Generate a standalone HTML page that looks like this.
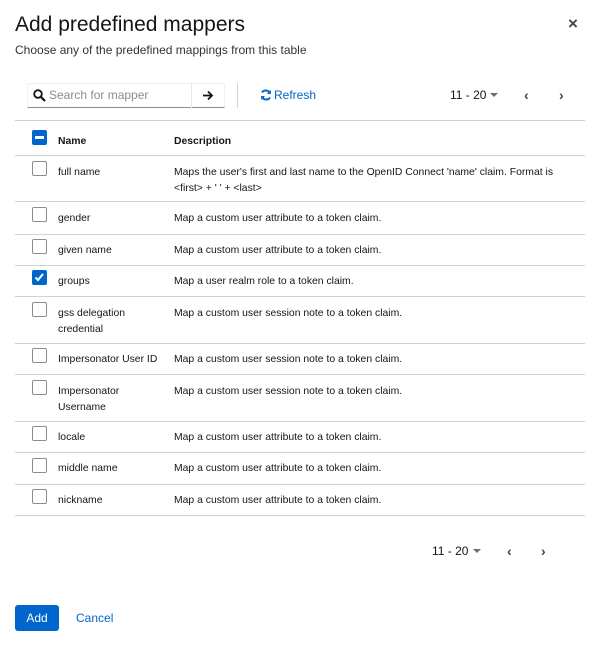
<!DOCTYPE html>
<html><head><style>
*{margin:0;padding:0;box-sizing:border-box}
body{width:600px;height:647px;background:#fff;font-family:"Liberation Sans",sans-serif;color:#151515;position:relative;overflow:hidden}
.a{position:absolute;white-space:nowrap}
.t{font-size:10.4px;line-height:16px}
.hl{position:absolute;left:15px;width:570px;height:1px;background:#d2d2d2}
.cb{position:absolute;left:32px;width:15px;height:15px;border:1px solid #8a8d90;border-radius:2px;background:#fff}
</style></head><body>
<div class="a" style="left:15px;top:11px;font-size:21px;line-height:28px">Add predefined mappers</div>
<div class="a" style="left:568px;top:14px;font-size:17px;font-weight:bold;color:#444">×</div>
<div class="a" style="left:15px;top:42px;font-size:12px;line-height:17px;color:#333">Choose any of the predefined mappings from this table</div>

<div class="a" style="left:27px;top:83px;width:198px;height:25px;border:1px solid #f0f0f0;border-bottom:1px solid #8a8d90"></div>
<div class="a" style="left:191px;top:83px;width:1px;height:25px;background:#e8e8e8"></div>
<svg class="a" style="left:33px;top:89px" width="13" height="13" viewBox="0 0 13 13"><circle cx="5" cy="5" r="3.8" fill="none" stroke="#151515" stroke-width="1.8"/><path d="M8 8l4 4" stroke="#151515" stroke-width="2.2"/></svg>
<div class="a" style="left:49px;top:88px;font-size:12px;color:#8a8d90">Search for mapper</div>
<svg class="a" style="left:202px;top:90px" width="12" height="11" viewBox="0 0 12 11"><path d="M1 5.5h9M6 1.5l4 4-4 4" fill="none" stroke="#151515" stroke-width="1.8"/></svg>
<div class="a" style="left:237px;top:83px;width:1px;height:25px;background:#d2d2d2"></div>
<svg class="a" style="left:260px;top:89px" width="12" height="12" viewBox="0 0 12 12"><path d="M10 4.5A4.5 4.5 0 0 0 2 3.5M2 7.5A4.5 4.5 0 0 0 10 8.5" fill="none" stroke="#0066cc" stroke-width="2"/><path d="M10.8 1v4H7z M1.2 11V7h3.8z" fill="#0066cc"/></svg>
<div class="a" style="left:274px;top:88px;font-size:12px;color:#0066cc">Refresh</div>
<div class="a" style="left:450px;top:88px;font-size:12px">11 - 20</div>
<div class="a" style="left:490px;top:93px;border:4px solid transparent;border-top:4px solid #6a6e73;border-bottom:0"></div>
<div class="a" style="left:524px;top:87px;font-size:14px;color:#444;font-weight:bold">‹</div>
<div class="a" style="left:559px;top:87px;font-size:14px;color:#444;font-weight:bold">›</div>

<div class="hl" style="top:120px"></div>
<div class="a" style="left:32px;top:130px;width:15px;height:15px;background:#0066cc;border-radius:2px"><div style="position:absolute;left:3px;top:6px;width:9px;height:3px;background:#fff"></div></div>
<div class="a t" style="left:58px;top:134px;font-weight:bold">Name</div>
<div class="a t" style="left:174px;top:134px;font-weight:bold">Description</div>
<div class="hl" style="top:155px"></div>

<div class="cb" style="top:161px"></div>
<div class="a t" style="left:58px;top:165px">full name</div>
<div class="a t" style="left:174px;top:165px">Maps the user's first and last name to the OpenID Connect 'name' claim. Format is<br>&lt;first&gt; + ' ' + &lt;last&gt;</div>
<div class="hl" style="top:201px"></div>

<div class="cb" style="top:207px"></div>
<div class="a t" style="left:58px;top:211px">gender</div>
<div class="a t" style="left:174px;top:211px">Map a custom user attribute to a token claim.</div>
<div class="hl" style="top:234px"></div>

<div class="cb" style="top:239px"></div>
<div class="a t" style="left:58px;top:243px">given name</div>
<div class="a t" style="left:174px;top:243px">Map a custom user attribute to a token claim.</div>
<div class="hl" style="top:265px"></div>

<div class="a" style="left:32px;top:270px;width:15px;height:15px;background:#0066cc;border-radius:2px"><svg width="15" height="15" viewBox="0 0 15 15"><path d="M3.5 7.5l2.5 2.5 5-6" fill="none" stroke="#fff" stroke-width="2"/></svg></div>
<div class="a t" style="left:58px;top:274px">groups</div>
<div class="a t" style="left:174px;top:274px">Map a user realm role to a token claim.</div>
<div class="hl" style="top:296px"></div>

<div class="cb" style="top:302px"></div>
<div class="a t" style="left:58px;top:306px">gss delegation<br>credential</div>
<div class="a t" style="left:174px;top:306px">Map a custom user session note to a token claim.</div>
<div class="hl" style="top:343px"></div>

<div class="cb" style="top:348px"></div>
<div class="a t" style="left:58px;top:352px">Impersonator User ID</div>
<div class="a t" style="left:174px;top:352px">Map a custom user session note to a token claim.</div>
<div class="hl" style="top:374px"></div>

<div class="cb" style="top:380px"></div>
<div class="a t" style="left:58px;top:384px">Impersonator<br>Username</div>
<div class="a t" style="left:174px;top:384px">Map a custom user session note to a token claim.</div>
<div class="hl" style="top:421px"></div>

<div class="cb" style="top:426px"></div>
<div class="a t" style="left:58px;top:430px">locale</div>
<div class="a t" style="left:174px;top:430px">Map a custom user attribute to a token claim.</div>
<div class="hl" style="top:452px"></div>

<div class="cb" style="top:458px"></div>
<div class="a t" style="left:58px;top:461px">middle name</div>
<div class="a t" style="left:174px;top:461px">Map a custom user attribute to a token claim.</div>
<div class="hl" style="top:484px"></div>

<div class="cb" style="top:489px"></div>
<div class="a t" style="left:58px;top:493px">nickname</div>
<div class="a t" style="left:174px;top:493px">Map a custom user attribute to a token claim.</div>
<div class="hl" style="top:515px"></div>

<div class="a" style="left:432px;top:544px;font-size:12px">11 - 20</div>
<div class="a" style="left:473px;top:549px;border:4px solid transparent;border-top:4px solid #6a6e73;border-bottom:0"></div>
<div class="a" style="left:507px;top:543px;font-size:14px;color:#444;font-weight:bold">‹</div>
<div class="a" style="left:541px;top:543px;font-size:14px;color:#444;font-weight:bold">›</div>

<div class="a" style="left:15px;top:605px;width:44px;height:26px;background:#0066cc;border-radius:3px;color:#fff;font-size:12px;line-height:26px;text-align:center">Add</div>
<div class="a" style="left:76px;top:611px;font-size:12px;color:#0066cc">Cancel</div>
</body></html>
